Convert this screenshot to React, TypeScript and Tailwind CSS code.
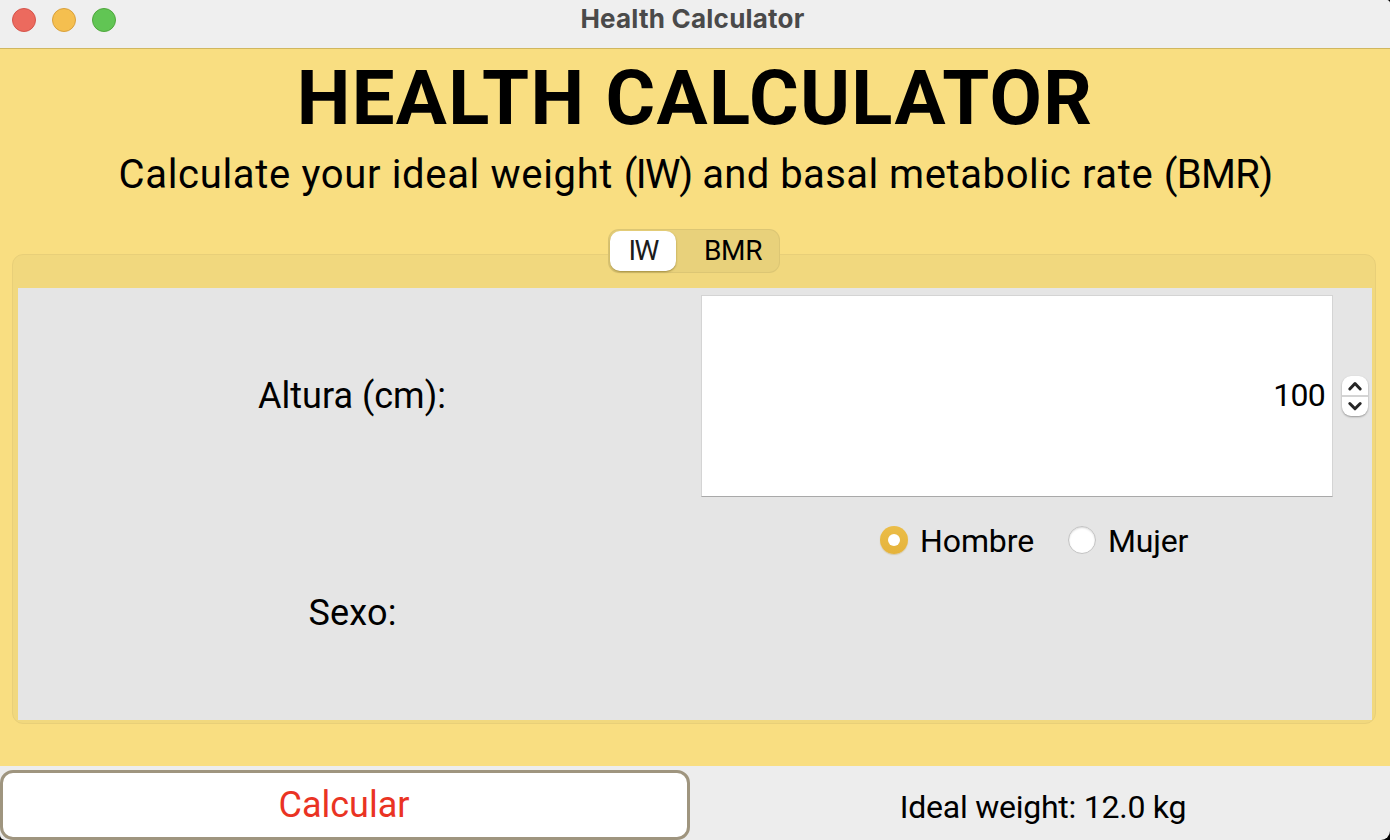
import React, { useState } from 'react';

function TitleBar() {
  return (
    <header className="relative flex h-[49px] shrink-0 justify-center border-b border-[#d0b75f] bg-[#efefef] pt-[4px]">
      <div className="absolute top-[8px] left-[12px] flex gap-4">
        <span className="size-6 rounded-full border border-[#d5544b] bg-[#ec6a5e]" />
        <span className="size-6 rounded-full border border-[#d9a03c] bg-[#f5bf4f]" />
        <span className="size-6 rounded-full border border-[#4fa73c] bg-[#61c554]" />
      </div>
      <h1 className="h-[30px] pr-[5px] font-['Inter',sans-serif] text-[26px] leading-[30px] font-bold tracking-[0.22px] text-[#4a4a4a]">
        Health Calculator
      </h1>
    </header>
  );
}

function Tabs() {
  return (
    <div className="relative z-10 mt-[29px] -mb-[19px] -ml-[2px] flex h-[44px] w-[172px] self-center rounded-[11px] border border-black/5 bg-[#e8d17b]">
      <button className="mt-px ml-px h-[40px] w-[66px] rounded-[10px] bg-white text-[28px] leading-[40px] tracking-[-1.8px] text-[#1c1c1c] shadow-[0_1px_2px_rgba(90,70,0,0.5)]">
        IW
      </button>
      <button className="ml-[11px] flex-1 text-[28px] leading-[40px] tracking-[-0.3px]">BMR</button>
    </div>
  );
}

function Stepper() {
  return (
    <div className="ml-[9px] h-[40px] w-[26px] shrink-0 rounded-[9px] bg-white shadow-[0_1px_2px_rgba(0,0,0,0.35)]">
      <svg viewBox="0 0 26 40" className="h-10 w-[26px]" fill="none">
        <path d="M0 20H26" stroke="#d4d4d4" strokeWidth="2" />
        <path d="M7.8 13L13 7.5L18.2 13" stroke="#262626" strokeWidth="3" strokeLinecap="round" strokeLinejoin="round" />
        <path d="M7.8 27.5L13 32.8L18.2 27.5" stroke="#262626" strokeWidth="3" strokeLinecap="round" strokeLinejoin="round" />
      </svg>
    </div>
  );
}

function Radio({ on }: { on: boolean }) {
  return on ? (
    <span className="flex size-7 items-center justify-center rounded-full bg-linear-to-b from-[#ebbd48] to-[#e5b33b] shadow-[0_1px_1px_rgba(180,140,30,0.3)]">
      <span className="size-3 rounded-full bg-white" />
    </span>
  ) : (
    <span className="size-7 rounded-full border border-[#c3c3c3] bg-white shadow-[inset_0_1px_2px_rgba(0,0,0,0.15)]" />
  );
}

export default function App() {
  const [sex, setSex] = useState('Hombre');
  return (
    <div className="h-[840px] w-[1390px] overflow-hidden bg-black font-['Roboto',sans-serif] text-black">
      <div className="flex h-full flex-col overflow-hidden rounded-tr-[4px] rounded-br-[9px] rounded-bl-[5px] bg-[#ededed]">
        <TitleBar />
        <main className="flex h-[717px] shrink-0 flex-col bg-[#f9de81] pt-[12px]">
          <h2 className="h-[74px] text-center text-[76px] leading-[74px] font-bold tracking-[1.28px]">
            HEALTH CALCULATOR
          </h2>
          <p className="mt-[15px] h-[50px] pl-px text-center text-[40px] leading-[50px] tracking-[0.42px]">
            <span className="tracking-[0.66px]">Calculate your ideal weight </span>
            <span className="tracking-[-1.6px]">(IW)</span>
            <span className="tracking-[0.7px]"> </span>
            and basal <span className="tracking-[0.62px]">metabolic rate </span>
            <span className="tracking-[-0.7px]">(BMR)</span>
          </p>
          <Tabs />
          <section className="mr-[14px] ml-[12px] h-[470px] rounded-[11px] border border-[#e8cf79] bg-[#f1d87e] pt-[33px] pr-[3px] pl-[5px]">
            <div className="grid h-[432px] grid-cols-[668px_1fr] grid-rows-2 bg-[#e5e5e5] text-[32px]">
              <label className="flex items-center justify-center text-[36px]">Altura (cm):</label>
              <div className="flex items-center pl-[15px]">
                <div className="flex h-[202px] w-[632px] items-center justify-end border border-[#d4d4d4] border-b-[#a9a9a9] bg-white pr-[7px] pb-[3px] tracking-[-0.7px]">
                  100
                </div>
                <Stepper />
              </div>
              <label className="flex items-center justify-center pt-px pl-px text-[36px] tracking-[0.2px]">Sexo:</label>
              <div className="flex items-start pt-[16px] pl-[194px]">
                <button onClick={() => setSex('Hombre')} className="flex h-10 w-[188px] items-center gap-[12px] tracking-[-0.1px]">
                  <Radio on={sex === 'Hombre'} />
                  <span className="pt-[2px]">Hombre</span>
                </button>
                <button onClick={() => setSex('Mujer')} className="flex h-10 items-center gap-[12px] tracking-[-0.2px]">
                  <Radio on={sex === 'Mujer'} />
                  <span className="pt-[2px]">Mujer</span>
                </button>
              </div>
            </div>
          </section>
        </main>
        <footer className="flex h-[74px] shrink-0 pt-[4px]">
          <button className="h-[70px] w-[690px] rounded-[13px] border-3 border-[#9f957f] bg-white pr-[2px] pb-px text-[36px] text-[#ea3323]">
            Calcular
          </button>
          <div className="flex flex-1 items-center justify-center pt-[3px] pl-[6px] text-[32px] tracking-[-0.25px]">
            Ideal weight: 12.0 kg
          </div>
        </footer>
      </div>
    </div>
  );
}
